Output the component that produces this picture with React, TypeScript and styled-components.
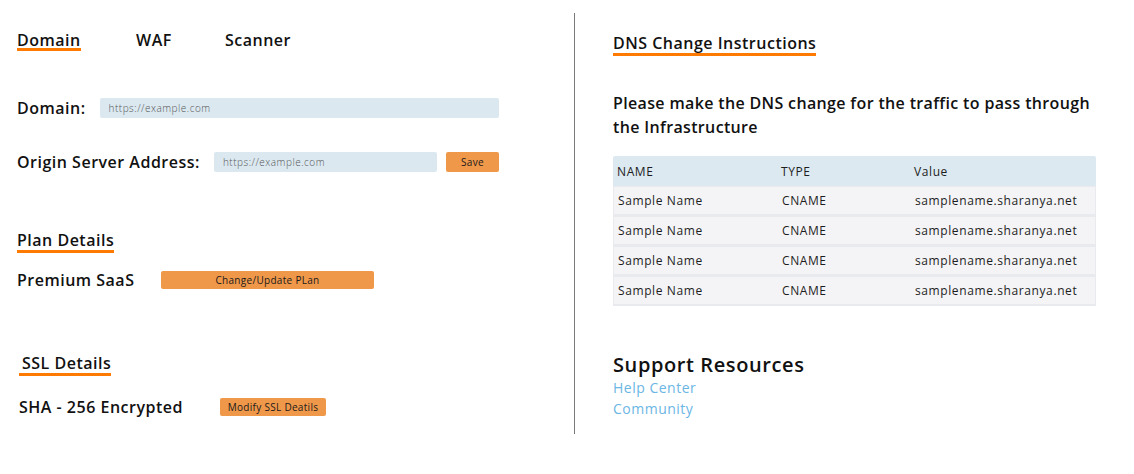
import React from 'react';
import styled, { createGlobalStyle } from 'styled-components';

const GlobalStyle = createGlobalStyle`
  html, body {
    margin: 0;
    padding: 0;
    background: #ffffff;
  }
  body {
    font-family: 'Open Sans', 'Noto Sans', sans-serif;
    letter-spacing: 0.5px;
    color: #111111;
  }
`;

const orange = '#ff7a00';
const buttonOrange = '#f0984a';
const inputBlue = '#dbe8f0';

const Page = styled.div`
  display: flex;
  align-items: flex-start;
  padding-top: 13px;
  width: 1134px;
  height: 474px;
  box-sizing: border-box;
`;

const LeftColumn = styled.section`
  width: 575px;
  height: 421px;
  box-sizing: border-box;
  padding-left: 17px;
  border-right: 1px solid #7a7a7a;
  display: flex;
  flex-direction: column;
  align-items: flex-start;
`;

const RightColumn = styled.section`
  width: 483px;
  margin-left: 38px;
  display: flex;
  flex-direction: column;
  align-items: flex-start;
`;

const Tabs = styled.nav`
  display: flex;
  margin-top: 20px;
`;

const Tab = styled.div<{ $active?: boolean; $width: number }>`
  width: ${({ $width }) => $width}px;
  font-size: 16px;
  font-weight: 600;
  line-height: 15px;
  span {
    display: inline-block;
    border-bottom: 3px solid ${({ $active }) => ($active ? orange : 'transparent')};
  }
`;

const SectionTitle = styled.h3<{ $top: number; $shift?: number }>`
  margin: ${({ $top }) => $top}px 0 0 ${({ $shift }) => $shift ?? 0}px;
  padding: 0 0 2px ${({ $shift }) => ($shift ? 3 : 0)}px;
  font-size: 16px;
  font-weight: 600;
  line-height: 16px;
  border-bottom: 3px solid ${orange};
`;

const FieldRow = styled.div<{ $top: number }>`
  margin-top: ${({ $top }) => $top}px;
  width: 482px;
  height: 20px;
  display: flex;
  align-items: center;
`;

const Label = styled.label`
  font-size: 16px;
  font-weight: 600;
  white-space: nowrap;
  margin-right: 14px;
`;

const TextInput = styled.input`
  flex: 1;
  min-width: 0;
  height: 20px;
  box-sizing: border-box;
  border: none;
  border-radius: 2px;
  background: ${inputBlue};
  padding: 0 9px;
  font-family: inherit;
  font-size: 10px;
  font-weight: 300;
  letter-spacing: 0.5px;
  outline: none;
  &::placeholder {
    color: #555555;
  }
`;

const ActionButton = styled.button<{ $width: number; $gap?: number }>`
  width: ${({ $width }) => $width}px;
  margin-left: ${({ $gap }) => $gap ?? 0}px;
  height: 18px;
  flex-shrink: 0;
  border: none;
  border-radius: 2px;
  background: ${buttonOrange};
  color: #1a1a1a;
  font-family: inherit;
  font-size: 10px;
  letter-spacing: 0.3px;
  padding: 0;
  cursor: pointer;
`;

const SaveButton = styled(ActionButton)`
  height: 20px;
`;

const DetailRow = styled.div<{ $top: number; $shift?: number }>`
  margin: ${({ $top }) => $top}px 0 0 ${({ $shift }) => $shift ?? 0}px;
  height: 20px;
  display: flex;
  align-items: center;
`;

const DetailText = styled.div<{ $width: number }>`
  width: ${({ $width }) => $width}px;
  font-size: 16px;
  font-weight: 600;
  white-space: nowrap;
`;

const Instructions = styled.p`
  margin: 35px 0 0;
  font-size: 16px;
  font-weight: 600;
  line-height: 24px;
  letter-spacing: 0.35px;
`;

const Table = styled.div`
  margin-top: 17px;
  width: 483px;
  font-size: 12px;
  letter-spacing: 0.6px;
  color: #1d1d1d;
`;

const TableRow = styled.div<{ $head?: boolean }>`
  display: grid;
  grid-template-columns: 164px 133px 1fr;
  align-items: center;
  height: 30px;
  box-sizing: border-box;
  padding: 0 4px;
  background: ${({ $head }) => ($head ? '#dce9f1' : '#f4f4f6')};
  border: ${({ $head }) => ($head ? 'none' : '1px solid #e9eaee')};
  border-bottom-width: ${({ $head }) => ($head ? 0 : 2)}px;
  border-radius: ${({ $head }) => ($head ? '2px 2px 0 0' : '0')};
`;

const SupportTitle = styled.h2`
  margin: 47px 0 0;
  font-size: 20px;
  font-weight: 600;
  line-height: 24px;
  letter-spacing: 0.6px;
`;

const SupportLink = styled.a`
  font-size: 14px;
  line-height: 21px;
  color: #6cb6e4;
  text-decoration: none;
`;

const records = [1, 2, 3, 4].map(() => ({
  name: 'Sample Name',
  type: 'CNAME',
  value: 'samplename.sharanya.net',
}));

export default function App() {
  return (
    <Page>
      <GlobalStyle />
      <LeftColumn>
        <Tabs>
          <Tab $active $width={119}>
            <span>Domain</span>
          </Tab>
          <Tab $width={89}>
            <span>WAF</span>
          </Tab>
          <Tab $width={90}>
            <span>Scanner</span>
          </Tab>
        </Tabs>

        <FieldRow $top={47}>
          <Label>Domain:</Label>
          <TextInput placeholder='https://example.com' />
        </FieldRow>
        <FieldRow $top={34}>
          <Label>Origin Server Address:</Label>
          <TextInput placeholder='https://example.com' />
          <SaveButton $width={53} $gap={9}>Save</SaveButton>
        </FieldRow>

        <SectionTitle $top={60}>Plan Details</SectionTitle>
        <DetailRow $top={17}>
          <DetailText $width={144}>Premium SaaS</DetailText>
          <ActionButton $width={213}>Change/Update PLan</ActionButton>
        </DetailRow>

        <SectionTitle $top={65} $shift={2}>SSL Details</SectionTitle>
        <DetailRow $top={21} $shift={2}>
          <DetailText $width={201}>SHA - 256 Encrypted</DetailText>
          <ActionButton $width={106}>Modify SSL Deatils</ActionButton>
        </DetailRow>
      </LeftColumn>

      <RightColumn>
        <SectionTitle $top={22}>DNS Change Instructions</SectionTitle>
        <Instructions>
          Please make the DNS change for the traffic to pass through the Infrastructure
        </Instructions>
        <Table>
          <TableRow $head>
            <span>NAME</span>
            <span>TYPE</span>
            <span>Value</span>
          </TableRow>
          {records.map((r, i) => (
            <TableRow key={i}>
              <span>{r.name}</span>
              <span>{r.type}</span>
              <span>{r.value}</span>
            </TableRow>
          ))}
        </Table>
        <SupportTitle>Support Resources</SupportTitle>
        <SupportLink href='#'>Help Center</SupportLink>
        <SupportLink href='#'>Community</SupportLink>
      </RightColumn>
    </Page>
  );
}
